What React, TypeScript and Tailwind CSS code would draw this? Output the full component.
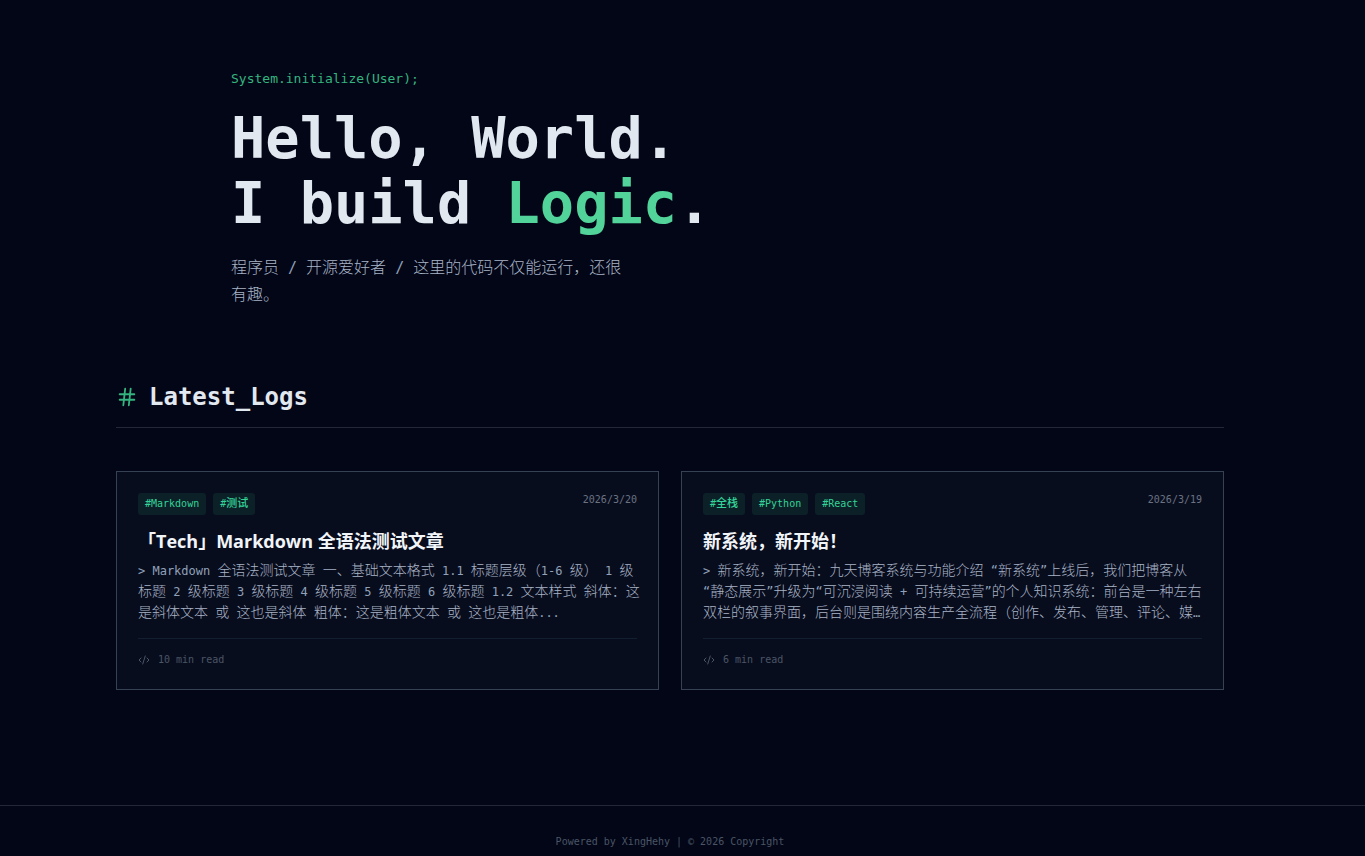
import { CodeXml, Hash } from 'lucide-react'

interface Post {
  id: number
  title: string
  excerpt: string
  tags: string[]
  date: string
  readTime: number
}

const posts: Post[] = [
  {
    id: 1,
    title: '「Tech」Markdown 全语法测试文章',
    excerpt:
      'Markdown 全语法测试文章 一、基础文本格式 1.1 标题层级（1-6 级） 1 级标题 2 级标题 3 级标题 4 级标题 5 级标题 6 级标题 1.2 文本样式 斜体：这是斜体文本 或 这也是斜体 粗体：这是粗体文本 或 这也是粗体...',
    tags: ['Markdown', '测试'],
    date: '2026/3/20',
    readTime: 10,
  },
  {
    id: 2,
    title: '新系统，新开始！',
    excerpt:
      '新系统，新开始：九天博客系统与功能介绍 “新系统”上线后，我们把博客从“静态展示”升级为“可沉浸阅读 + 可持续运营”的个人知识系统：前台是一种左右双栏的叙事界面，后台则是围绕内容生产全流程（创作、发布、管理、评论、媒…',
    tags: ['全栈', 'Python', 'React'],
    date: '2026/3/19',
    readTime: 6,
  },
]

// Latin runs are set a little smaller than the Chinese around them
function MixedText({ text, latin }: { text: string; latin: string }) {
  return (
    <>
      {text.split(/([ -~“”…]+)/).map((part, index) =>
        index % 2 === 1 ? (
          <span key={index} className={latin}>
            {/* an opening quote may start a new line */}
            {part.startsWith('“') ? <wbr /> : null}
            {part}
          </span>
        ) : (
          part
        ),
      )}
    </>
  )
}

function Hero() {
  return (
    <section className="mx-auto w-full max-w-[922px] px-[22px] pt-[69px]">
      <p className="text-[13px] leading-5 text-[#34b57f]">System.initialize(User);</p>
      <h1 className="mt-[17px] text-[57px] leading-[65px] font-bold text-slate-200">
        Hello, World.
        <br />I build <span className="text-[#52d39a]">Logic</span>.
      </h1>
      <p className="mt-[18px] max-w-[403px] text-base leading-[27px] font-light text-[#a8b4c6]">
        <MixedText
          text="程序员 / 开源爱好者 / 这里的代码不仅能运行，还很有趣。"
          latin="text-[15px] leading-none text-slate-400"
        />
      </p>
    </section>
  )
}

function PostCard({ post }: { post: Post }) {
  return (
    <article className="min-w-0 border border-gray-700 bg-[#080d1e] p-[21px] pb-[22px]">
      <div className="flex items-start justify-between">
        <ul className="flex flex-wrap gap-[7px]">
          {post.tags.map((tag) => (
            <li
              key={tag}
              className="rounded-[3px] bg-[#0c2028] px-[7px] text-[11px] leading-[22px] font-medium text-[#34d399]"
            >
              <MixedText text={`#${tag}`} latin="text-[10px]" />
            </li>
          ))}
        </ul>
        <time className="text-[10px] leading-[14px] text-gray-500">{post.date}</time>
      </div>

      <h3 className="mt-3 font-['Open_Sans','Noto_Sans_CJK_SC',sans-serif] text-lg leading-7 font-bold text-slate-100">
        {post.title}
      </h3>
      <p className="mt-[5px] -mr-1 text-sm leading-[21px] font-light text-[#a8b4c6]">
        <MixedText text={`> ${post.excerpt}`} latin="text-xs leading-none text-slate-400" />
      </p>

      <div className="mt-[15px] flex items-center gap-2 border-t border-slate-800/60 pt-[14px] text-[10px] leading-[14px] text-gray-600">
        <CodeXml size={12} />
        <span>{post.readTime} min read</span>
      </div>
    </article>
  )
}

export default function App() {
  return (
    <div
      lang="zh-CN"
      className="min-h-screen bg-[#020617] font-['DejaVu_Sans_Mono','Noto_Sans_CJK_SC',monospace] text-slate-200"
    >
      <main className="pr-[25px]">
        <Hero />

        <section className="mx-auto w-full max-w-[1152px] px-[22px] pt-[73px]">
          <div className="flex items-center gap-[11px] border-b border-[#242736] pb-[14px]">
            <Hash size={22} className="text-[#34b57f]" />
            <h2 className="text-2xl leading-8 font-bold">Latest_Logs</h2>
          </div>

          <div className="mt-[43px] grid grid-cols-1 gap-[22px] md:grid-cols-2">
            {posts.map((post) => (
              <PostCard key={post.id} post={post} />
            ))}
          </div>
        </section>
      </main>

      <footer className="mt-[115px] border-t border-[#242736] pt-[29px] pr-[25px] pb-1 text-center text-[10px] leading-[14px] text-gray-600">
        Powered by XingHehy | © 2026 Copyright
      </footer>
    </div>
  )
}
